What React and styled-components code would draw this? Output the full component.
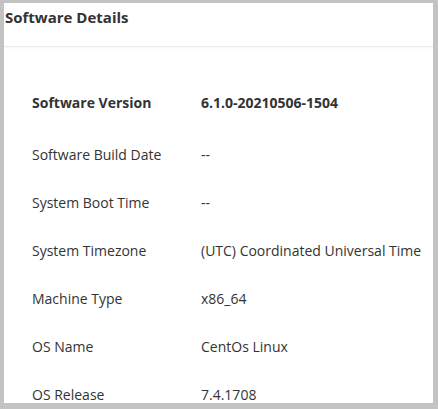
import React from "react";
import styled, { createGlobalStyle } from "styled-components";

// --- Data --- //

const rows = [
  { label: "Software Version", value: "6.1.0-20210506-1504", strong: true },
  { label: "Software Build Date", value: "--" },
  { label: "System Boot Time", value: "--" },
  { label: "System Timezone", value: "(UTC) Coordinated Universal Time" },
  { label: "Machine Type", value: "x86_64" },
  { label: "OS Name", value: "CentOs Linux" },
  { label: "OS Release", value: "7.4.1708" },
];

// --- Components --- //

const App = () => {
  return (
    <>
      <GlobalStyle />
      <Frame>
        <Panel>
          <Header>
            <Title>Software Details</Title>
          </Header>
          <Body>
            {rows.map((row) => (
              <Row key={row.label} $strong={row.strong}>
                <Label>{row.label}</Label>
                <Value>{row.value}</Value>
              </Row>
            ))}
          </Body>
        </Panel>
      </Frame>
    </>
  );
};

export default App;

// --- Styles --- //

const GlobalStyle = createGlobalStyle`
  html, body {
    margin: 0;
    padding: 0;
    background: #c3c3c3;
    font-family: "Open Sans", "Noto Sans", sans-serif;
  }
`;

const Frame = styled.div`
  width: 438px;
  height: 409px;
  box-sizing: border-box;
  padding: 3px 5px 6px 4px;
  background: #c3c3c3;
`;

const Panel = styled.div`
  width: 100%;
  height: 100%;
  background: #ffffff;
  overflow: hidden;
  display: flex;
  flex-direction: column;
`;

const Header = styled.div`
  height: 43px;
  flex-shrink: 0;
  padding-left: 1px;
  border-bottom: 1px solid #ececec;
  box-shadow: 0 1px 2px rgba(0, 0, 0, 0.04);
`;

const Title = styled.h2`
  margin: 0;
  font-size: 15px;
  line-height: 28px;
  font-weight: 700;
  color: #333333;
`;

const Body = styled.div`
  padding: 28px 0 0 28px;
  display: flex;
  flex-direction: column;
`;

const Row = styled.div`
  display: grid;
  grid-template-columns: 169px 1fr;
  align-items: center;
  height: ${(props) => (props.$strong ? "55px" : "48px")};
  flex-shrink: 0;
  font-size: 14px;
  color: #333333;
  font-weight: ${(props) => (props.$strong ? 700 : 400)};
  white-space: nowrap;
`;

const Label = styled.div``;

const Value = styled.div``;
